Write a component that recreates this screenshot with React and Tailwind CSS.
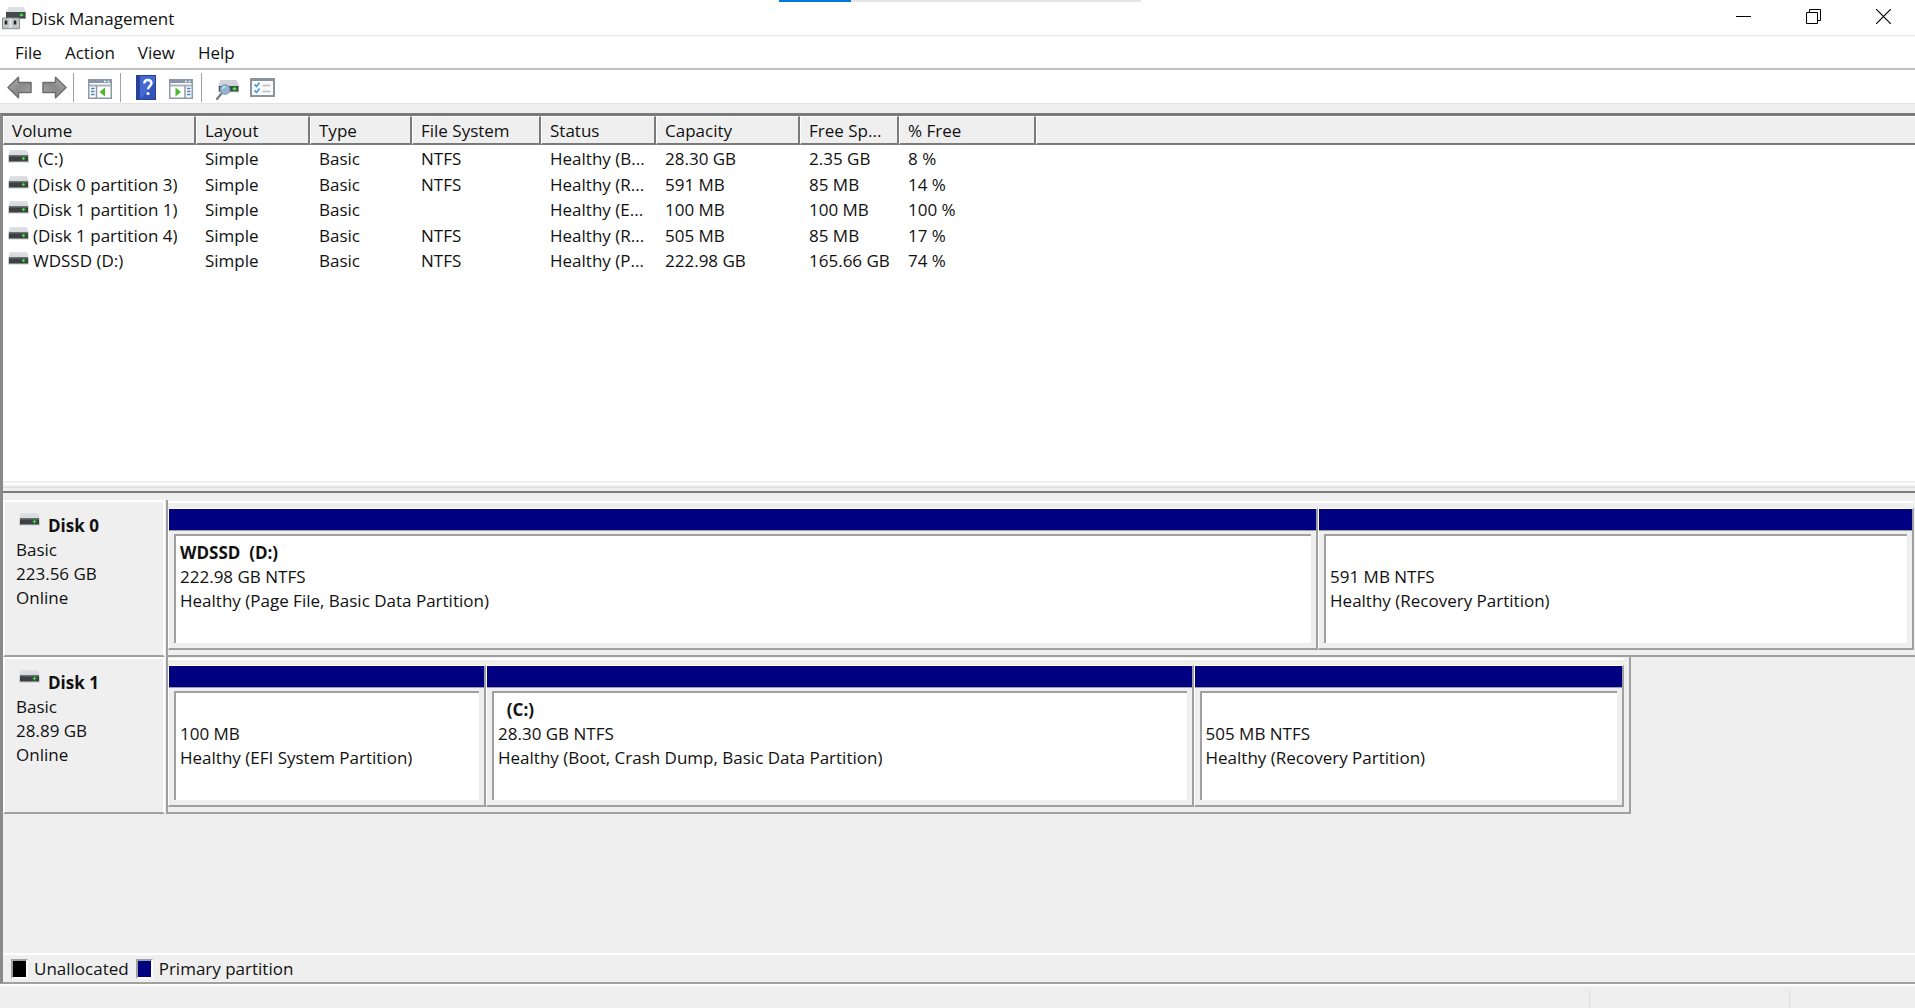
import clsx from 'clsx';

const volumes = [
  { name: '(C:)', indent: true, fs: 'NTFS', status: 'Healthy (B...', capacity: '28.30 GB', free: '2.35 GB', percent: '8 %' },
  { name: '(Disk 0 partition 3)', fs: 'NTFS', status: 'Healthy (R...', capacity: '591 MB', free: '85 MB', percent: '14 %' },
  { name: '(Disk 1 partition 1)', fs: '', status: 'Healthy (E...', capacity: '100 MB', free: '100 MB', percent: '100 %' },
  { name: '(Disk 1 partition 4)', fs: 'NTFS', status: 'Healthy (R...', capacity: '505 MB', free: '85 MB', percent: '17 %' },
  { name: 'WDSSD (D:)', fs: 'NTFS', status: 'Healthy (P...', capacity: '222.98 GB', free: '165.66 GB', percent: '74 %' },
];

const columns = ['Volume', 'Layout', 'Type', 'File System', 'Status', 'Capacity', 'Free Sp...', '% Free'];

const disks = [
  {
    name: 'Disk 0',
    size: '223.56 GB',
    width: 'w-full pr-px',
    partitions: [
      { grow: 'grow-[1151]', title: 'WDSSD  (D:)', size: '222.98 GB NTFS', status: 'Healthy (Page File, Basic Data Partition)' },
      { grow: 'grow-[595]', title: '', size: '591 MB NTFS', status: 'Healthy (Recovery Partition)' },
    ],
  },
  {
    name: 'Disk 1',
    size: '28.89 GB',
    width: 'w-67/80 border-r-2 pr-[5px]',
    partitions: [
      { grow: 'grow-[317]', title: '', size: '100 MB', status: 'Healthy (EFI System Partition)' },
      { grow: 'grow-[709]', title: '  (C:)', size: '28.30 GB NTFS', status: 'Healthy (Boot, Crash Dump, Basic Data Partition)' },
      { grow: 'grow-[430]', title: '', size: '505 MB NTFS', status: 'Healthy (Recovery Partition)' },
    ],
  },
];

function DriveIcon() {
  return (
    <svg className="shrink-0" width="21" height="13" viewBox="0 0 21 13" aria-hidden="true">
      <defs>
        <linearGradient id="driveTop" x1="0" y1="0" x2="0" y2="1">
          <stop offset="0" stopColor="#dfe2e5" />
          <stop offset="1" stopColor="#c6cbd0" />
        </linearGradient>
      </defs>
      <path d="M2 0h17L21 6v6.5H0V6z" fill="url(#driveTop)" />
      <rect x="1" y="5.5" width="19" height="6" fill="#3d3f40" />
      <rect x="1" y="5.5" width="19" height="1.5" fill="#54585a" />
      <path d="M13.5 8.5h4M15.5 6.5v4" stroke="#1f9c2a" strokeWidth="1.6" />
      <circle cx="15.5" cy="8.5" r="1" fill="#5dff5a" />
    </svg>
  );
}

function AppIcon() {
  return (
    <svg width="24" height="24" viewBox="0 0 24 24" aria-hidden="true">
      <path d="M7 1h14l3 5v7H4V6z" fill="#c9cdd0" />
      <path d="M7 1h14l3 5H4z" fill="#dcdfe1" />
      <rect x="4" y="6" width="19.5" height="6.5" fill="#45494b" />
      <path d="M17 9h5M19.5 7v4" stroke="#1f9c2a" strokeWidth="1.6" />
      <circle cx="19.5" cy="9" r="1.1" fill="#6cff62" />
      <path d="M.5 12h17v10.5H.5z" fill="#c9cacc" stroke="#8b8e91" />
      <path d="M.5 22.5h17" stroke="#9da0a2" strokeWidth="1.5" />
      <path d="M4 14.5v4M13 14.5v4" stroke="#25282a" strokeWidth="2.6" />
      <path d="M8.5 12.5v9.5" stroke="#e4e5e6" strokeWidth="2" />
    </svg>
  );
}

function ArrowIcon({ flip }) {
  return (
    <svg className={clsx(flip && '-scale-x-100')} width="25" height="23" viewBox="0 0 25 23" aria-hidden="true">
      <defs>
        <linearGradient id="arrowFill" x1="0" y1="0" x2="1" y2="1">
          <stop offset="0" stopColor="#b5b5b5" />
          <stop offset=".5" stopColor="#8a8a8a" />
          <stop offset="1" stopColor="#a8a8a8" />
        </linearGradient>
      </defs>
      <path
        d="M1 11.5 11.5 1.3V6.5H24v10H11.5v5.2z"
        fill="url(#arrowFill)"
        stroke="#6c6c6c"
        strokeWidth="1.5"
        strokeLinejoin="round"
      />
    </svg>
  );
}

function PaneIcon({ side }) {
  return (
    <svg width="24" height="20" viewBox="0 0 24 20" aria-hidden="true">
      <rect x=".75" y=".75" width="22.5" height="18.5" fill="#fff" stroke="#8f99a6" strokeWidth="1.5" />
      <rect x="1" y="1" width="22" height="3" fill="#8795a8" />
      <path d="M16 2.5h2M19.5 2.5h2" stroke="#e9eef4" strokeWidth="1.5" />
      <path d="M1 6.5h22" stroke="#a9b2be" strokeWidth="2" />
      {side === 'left' ? (
        <>
          <path d="M8.5 7v12" stroke="#8f99a6" strokeWidth="1.5" />
          <path d="M3 9.5h3.5M3 12.5h3.5M3 15.5h3.5" stroke="#4a80b8" strokeWidth="1.5" />
          <path d="M17 8.5v9L11.5 13z" fill="#4dbb27" />
        </>
      ) : (
        <>
          <path d="M16 7v12" stroke="#8f99a6" strokeWidth="1.5" />
          <path d="M18 9.5h3.5M18 12.5h3.5M18 15.5h3.5" stroke="#4a80b8" strokeWidth="1.5" />
          <path d="M6.5 8.5v9L12 13z" fill="#4dbb27" />
        </>
      )}
    </svg>
  );
}

function HelpIcon() {
  return (
    <svg width="20" height="25" viewBox="0 0 20 25" aria-hidden="true">
      <rect x=".5" y=".5" width="19" height="24" fill="#4468d4" stroke="#2b3f8c" />
      <path d="M1 1h3v23H1z" fill="#27429c" />
      <path d="M4 24 19 8v16z" fill="#3454bd" />
      <path
        d="M8.3 8.5c0-2.2 1.5-3.5 3.5-3.5s3.6 1.3 3.6 3.3c0 2.6-3.3 3-3.3 6"
        fill="none"
        stroke="#fff"
        strokeWidth="2.4"
      />
      <circle cx="12" cy="18.5" r="1.6" fill="#fff" />
    </svg>
  );
}

function RescanIcon() {
  return (
    <svg width="24" height="21" viewBox="0 0 24 21" aria-hidden="true">
      <path d="M4.5 1h16L23 7v6.5H2V7z" fill="#d0d4d8" />
      <rect x="3" y="7" width="19.5" height="5.5" fill="#45494b" />
      <path d="M16 9.7h5M18.5 7.7v4" stroke="#1f9c2a" strokeWidth="2" />
      <circle cx="18.5" cy="9.7" r="1.2" fill="#5dff5a" />
      <path d="M5.5 14.5 1 20" stroke="#767b80" strokeWidth="2.2" strokeLinecap="round" />
      <circle cx="9" cy="10.5" r="4.7" fill="#8fb6d2" stroke="#7f9bb0" strokeWidth="1.2" />
      <path d="M6.5 10a3 3 0 0 1 3-2.5" fill="none" stroke="#c9e2f2" strokeWidth="1.5" />
    </svg>
  );
}

function ChecklistIcon() {
  return (
    <svg width="25" height="19" viewBox="0 0 25 19" aria-hidden="true">
      <rect x="1" y="1" width="23" height="17" fill="#fafafa" stroke="#8b9299" strokeWidth="2" />
      <path d="M1 2h23" stroke="#8b9299" strokeWidth="2" />
      <path d="m4.5 6.5 2 2 3-4M4.5 12.5l2 2 3-4" fill="none" stroke="#4a9fdc" strokeWidth="1.8" />
      <path d="M12.5 7.5h8M12.5 13.5h8" stroke="#b9bdc1" strokeWidth="1.5" />
    </svg>
  );
}

function ToolButton({ label, className, children }) {
  return (
    <button type="button" aria-label={label} className={clsx('flex items-center justify-center', className)}>
      {children}
    </button>
  );
}

function Separator() {
  return <div className="h-[29px] w-px bg-[#a0a0a0]" />;
}

function TitleBar() {
  return (
    <header className="flex h-9 items-center border-b border-[#e8e8e8] pl-[2px]">
      <AppIcon />
      <h1 className="ml-[5px] pt-[2px]">Disk Management</h1>
      <div className="mb-[3px] ml-auto flex gap-6 pr-[9px]">
        <button type="button" aria-label="Minimize" className="flex w-[46px] justify-center">
          <svg width="15" height="15" viewBox="0 0 15 15">
            <path d="M0 7.5h15" stroke="#000" />
          </svg>
        </button>
        <button type="button" aria-label="Restore" className="flex w-[46px] justify-center">
          <svg width="15" height="15" viewBox="0 0 15 15" fill="none" stroke="#000">
            <path d="M.5 3.5h11v11H.5zM3.5 3.5v-3h11v11h-3" />
          </svg>
        </button>
        <button type="button" aria-label="Close" className="flex w-[46px] justify-center">
          <svg width="15" height="15" viewBox="0 0 15 15">
            <path d="m0 0 15 15M15 0 0 15" stroke="#000" strokeWidth="1.2" />
          </svg>
        </button>
      </div>
    </header>
  );
}

function VolumeTable() {
  return (
    <table className="w-full table-fixed border-separate border-spacing-0 text-left">
      <colgroup>
        <col className="w-[193px]" />
        <col className="w-[114px]" />
        <col className="w-[102px]" />
        <col className="w-[129px]" />
        <col className="w-[115px]" />
        <col className="w-[144px]" />
        <col className="w-[99px]" />
        <col className="w-[137px]" />
        <col />
      </colgroup>
      <thead>
        <tr className="h-[29px] bg-[#efefef]">
          {columns.map((column) => (
            <th
              key={column}
              scope="col"
              className="border-t border-r-2 border-b-2 border-l border-t-white border-r-[#7a7a7a] border-b-[#7a7a7a] border-l-white pt-[2px] pl-2 font-normal whitespace-nowrap"
            >
              {column}
            </th>
          ))}
          <td className="border-t border-b-2 border-l border-t-white border-b-[#7a7a7a] border-l-white" />
        </tr>
      </thead>
      <tbody className="before:block before:h-px">
        {volumes.map((volume) => (
          <tr key={volume.name} className="h-[25px] whitespace-nowrap odd:h-[26px] *:pl-[9px]">
            <td>
              <div className="-ml-1 flex items-center gap-1">
                <div className="pb-[5px]">
                  <DriveIcon />
                </div>
                <span className={clsx(volume.indent && 'pl-[5px]')}>{volume.name}</span>
              </div>
            </td>
            <td>Simple</td>
            <td>Basic</td>
            <td>{volume.fs}</td>
            <td>{volume.status}</td>
            <td>{volume.capacity}</td>
            <td>{volume.free}</td>
            <td>{volume.percent}</td>
          </tr>
        ))}
      </tbody>
    </table>
  );
}

function Partition({ partition }) {
  return (
    <div
      className={clsx(
        'min-w-0 basis-0 border-t border-r-2 border-b-2 border-l border-t-white border-r-[#a0a0a0] border-b-[#a0a0a0] border-l-white',
        partition.grow
      )}
    >
      <div className="h-[22px] border-b border-[#a0a0a0] bg-[#000080]" />
      <div className="mx-[5px] mt-[3px] mb-[5px] h-[109px] border-t-2 border-l-2 border-[#a0a0a0] bg-white pt-[5px] pl-1">
        <p className="h-6 font-bold whitespace-pre">{partition.title}</p>
        <p>{partition.size}</p>
        <p className="truncate">{partition.status}</p>
      </div>
    </div>
  );
}

function DiskRow({ disk }) {
  return (
    <section className="flex leading-6">
      <div className="flex w-[162px] shrink-0 flex-col border-t-2 border-r-2 border-b-2 border-l-2 border-white border-b-[#a0a0a0] pt-[11px] pl-[11px]">
        <div className="flex items-center gap-2 pl-[3px]">
          <div className="pb-3">
            <DriveIcon />
          </div>
          <h2 className="font-bold">{disk.name}</h2>
        </div>
        <p>Basic</p>
        <p>{disk.size}</p>
        <p>Online</p>
      </div>
      <div className="min-w-0 grow pl-px">
        <div className={clsx('border-b-2 border-l-2 border-[#a0a0a0]', disk.width)}>
          <div className="h-[3px] border-b-2 border-white" />
          <div className="flex pt-[5px] pb-[5px]">
            {disk.partitions.map((partition) => (
              <Partition key={partition.status} partition={partition} />
            ))}
          </div>
        </div>
      </div>
    </section>
  );
}

export default function App() {
  return (
    <div className="relative flex min-h-screen flex-col bg-white font-['Open_Sans','Noto_Sans',sans-serif] text-[17px] leading-6 text-[#111]">
      <div className="absolute top-0 left-[779px] h-[2px] w-[362px] bg-[#e5e5e5]">
        <div className="h-full w-1/5 bg-[#0078d7]" />
      </div>

      <TitleBar />

      <nav className="flex h-[34px] items-center gap-[23px] border-b-2 border-[#c0c0c0] pt-[2px] pl-[15px]">
        <button type="button">File</button>
        <button type="button">Action</button>
        <button type="button">View</button>
        <button type="button">Help</button>
      </nav>

      <div className="flex h-[33px] items-center pt-px pl-[7px]">
        <ToolButton label="Back">
          <ArrowIcon />
        </ToolButton>
        <ToolButton label="Forward" className="mr-[6px] ml-[10px]">
          <ArrowIcon flip />
        </ToolButton>
        <Separator />
        <ToolButton label="Show console tree" className="mt-1 mr-2 ml-[14px]">
          <PaneIcon side="left" />
        </ToolButton>
        <Separator />
        <ToolButton label="Help topics" className="mr-[13px] ml-[15px]">
          <HelpIcon />
        </ToolButton>
        <ToolButton label="Show action pane" className="mt-1 mr-2">
          <PaneIcon side="right" />
        </ToolButton>
        <Separator />
        <ToolButton label="Rescan disks" className="mt-1 mr-[10px] ml-[14px]">
          <RescanIcon />
        </ToolButton>
        <ToolButton label="Properties">
          <ChecklistIcon />
        </ToolButton>
      </div>
      <div className="h-[10px] border-t border-[#e3e3e3] bg-[#efefef]" />

      <main className="flex grow flex-col border-t-3 border-b-2 border-l-3 border-t-[#7a7a7a] border-b-[#a0a0a0] border-l-[#8a8a8a] bg-[#efefef]">
        <div className="h-[365px] bg-white">
          <VolumeTable />
        </div>
        {/* splitter between the list and the graphical view */}
        <div className="h-3 border-b-2 border-[#7a7a7a]">
          <div className="mt-[2px] h-[2px] bg-white" />
          <div className="mt-[2px] h-px bg-[#dcdcdc]" />
        </div>
        <div className="grow pt-[7px]">
          {disks.map((disk) => (
            <DiskRow key={disk.name} disk={disk} />
          ))}
        </div>
        <div className="flex h-[29px] items-center border-t-2 border-white pl-2">
          <div className="h-5 w-[17px] border-2 border-t-[#a0a0a0] border-r-white border-b-white border-l-[#a0a0a0] bg-black" />
          <span className="mr-[7px] ml-[6px] pt-px">Unallocated</span>
          <div className="h-5 w-[17px] border-2 border-t-[#a0a0a0] border-r-white border-b-white border-l-[#a0a0a0] bg-[#000080]" />
          <span className="ml-[6px] pt-px">Primary partition</span>
        </div>
      </main>

      <footer className="flex h-6 justify-end border-t-2 border-white bg-[#efefef] pt-1">
        <div className="w-[200px] border-l border-[#dcdcdc]" />
        <div className="w-[126px] border-l border-[#dcdcdc]" />
      </footer>
    </div>
  );
}
